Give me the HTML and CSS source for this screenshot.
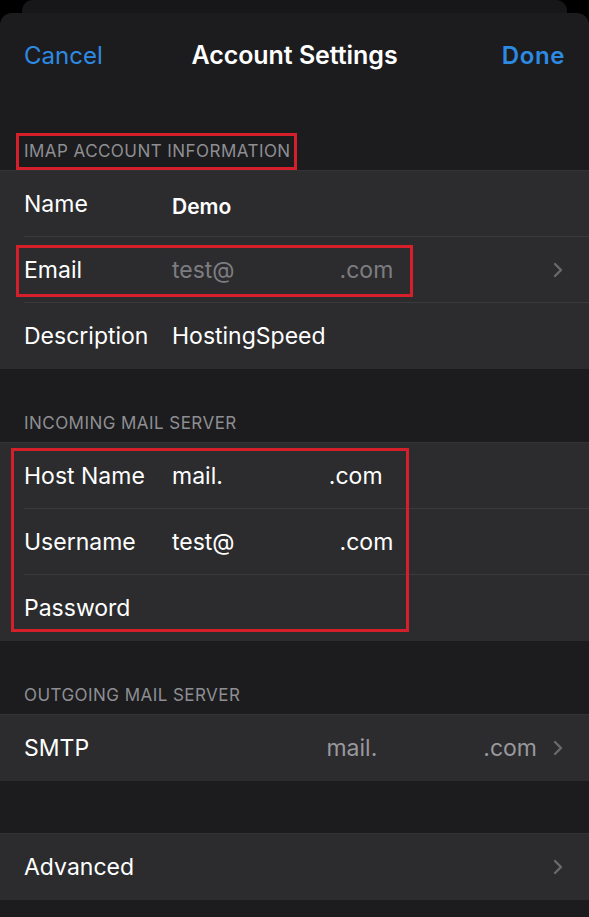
FILE: index.html
```html
<!DOCTYPE html>
<html lang="en">
<head>
<meta charset="utf-8">
<title>Account Settings</title>
<link rel="stylesheet" href="styles.css">
</head>
<body>
<div class="backcard"></div>
<div class="sheet">
  <header class="nav">
    <span class="nav-btn">Cancel</span>
    <span class="nav-title">Account Settings</span>
    <span class="nav-btn done">Done</span>
  </header>

  <div class="sec-head"><span class="sec-text">IMAP ACCOUNT INFORMATION</span><span class="mark mark-imap"></span></div>
  <div class="group">
    <div class="row"><span class="label">Name</span><span class="value bold">Demo</span></div>
    <div class="row"><span class="label">Email</span><span class="value dim">test@<span class="blur b-email"></span>.com</span><span class="chev"><svg viewBox="0 0 10 16" width="10" height="16"><polyline points="2,2 8,8 2,14" /></svg></span><span class="mark mark-email"></span></div>
    <div class="row"><span class="label">Description</span><span class="value">HostingSpeed</span></div>
  </div>

  <div class="sec-head"><span class="sec-text">INCOMING MAIL SERVER</span></div>
  <div class="group">
    <span class="mark mark-incoming"></span>
    <div class="row"><span class="label">Host Name</span><span class="value">mail.<span class="blur b-host"></span>.com</span></div>
    <div class="row"><span class="label">Username</span><span class="value">test@<span class="blur b-email"></span>.com</span></div>
    <div class="row"><span class="label">Password</span><span class="value"></span></div>
  </div>

  <div class="sec-head"><span class="sec-text">OUTGOING MAIL SERVER</span></div>
  <div class="group">
    <div class="row"><span class="label">SMTP</span><span class="value right dim2">mail.<span class="blur b-smtp"></span>.com</span><span class="chev"><svg viewBox="0 0 10 16" width="10" height="16"><polyline points="2,2 8,8 2,14" /></svg></span></div>
  </div>

  <div class="gap"></div>
  <div class="group">
    <div class="row"><span class="label">Advanced</span><span class="value"></span><span class="chev"><svg viewBox="0 0 10 16" width="10" height="16"><polyline points="2,2 8,8 2,14" /></svg></span></div>
  </div>
</div>
</body>
</html>
```

FILE: styles.css
```css
* { box-sizing: border-box; }
html, body { margin: 0; padding: 0; }
body {
  background: #000;
  font-family: Inter, "Noto Sans", sans-serif;
  color: #fff;
  width: 589px;
  height: 917px;
  overflow: hidden;
}
.backcard {
  height: 13px;
  margin: 0 22px;
  background: #171719;
  border-radius: 11px 11px 0 0;
}
.sheet {
  background: #1c1c1e;
  border-radius: 12px 12px 0 0;
  height: 904px;
}
.nav {
  height: 84px;
  display: flex;
  align-items: center;
  justify-content: space-between;
  padding: 0 24px;
  position: relative;
  font-size: 24px;
}
.nav-btn { color: #2d8ae2; letter-spacing: 0; }
.nav-btn.done { font-weight: 600; letter-spacing: 0.6px; }
.nav-title {
  font-weight: 600;
  font-size: 25px;
  position: absolute;
  left: 0; right: 0;
  text-align: center;
  letter-spacing: -0.05px;
  pointer-events: none;
}
.sec-head {
  height: 73px;
  padding: 44px 24px 0;
  font-size: 17px;
  line-height: 20px;
  color: #8e8e93;
  position: relative;
  letter-spacing: 0.45px;
}
.group {
  background: #2c2c2e;
  position: relative;
  border-top: 1px solid #333336;
}
.row {
  height: 66px;
  display: flex;
  align-items: center;
  padding-left: 24px;
  font-size: 23px;
  position: relative;
}
.row + .row::before {
  content: "";
  position: absolute;
  top: -1px;
  left: 24px;
  right: 0;
  height: 1px;
  background: #3a3a3c;
}
.label { width: 148px; flex: none; }
.value { flex: 1; display: flex; align-items: center; }
.value.bold { font-weight: 600; font-size: 21px; padding-top: 4px; }
.value.dim { color: #7d7d81; }
.value.dim2 { color: #98989d; }
.value.right { justify-content: flex-end; }
.blur { display: inline-block; height: 22px; }
.b-email { width: 105px; }
.b-host { width: 106px; }
.b-smtp { width: 106px; }
.chev {
  width: 52px;
  flex: none;
  display: flex;
  justify-content: flex-start;
  padding-left: 16px;
}
.chev svg polyline {
  fill: none;
  stroke: #69696d;
  stroke-width: 2.4;
  stroke-linecap: round;
  stroke-linejoin: round;
}
.gap { height: 52px; }
.mark {
  position: absolute;
  border: 3px solid #d5202b;
  pointer-events: none;
}
.mark-imap { left: 16px; top: 36px; width: 281px; height: 37px; }
.mark-email { left: 16px; top: 8px; width: 397px; height: 52px; }
.mark-incoming { left: 11px; top: 5px; width: 398px; height: 184px; z-index: 2; }
```
